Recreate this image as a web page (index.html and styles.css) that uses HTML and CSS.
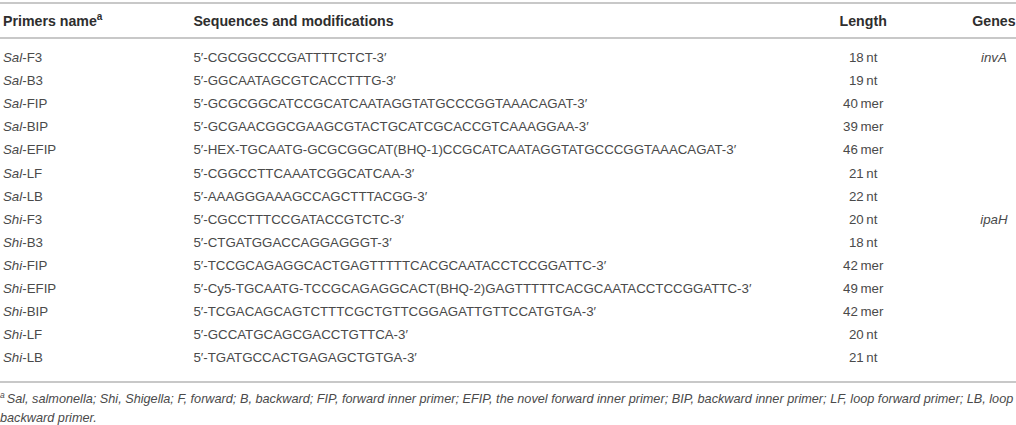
FILE: index.html
```html
<!DOCTYPE html>
<html lang="en">
<head>
<meta charset="utf-8">
<title>Primers</title>
<link rel="stylesheet" href="styles.css">
</head>
<body>
<div class="wrap">
<table class="primers">
  <colgroup>
    <col class="c-name">
    <col class="c-seq">
    <col class="c-len">
    <col class="c-gene">
  </colgroup>
  <thead>
    <tr>
      <th class="name">Primers name<sup>a</sup></th>
      <th class="seq">Sequences and modifications</th>
      <th class="len">Length</th>
      <th class="gene">Genes</th>
    </tr>
  </thead>
  <tbody>
    <tr class="pad-top"><td colspan="4"></td></tr>
    <tr><td class="name"><i>Sal</i>-F3</td><td class="seq">5′-CGCGGCCCGATTTTCTCT-3′</td><td class="len">18&thinsp;nt</td><td class="gene"><i>invA</i></td></tr>
    <tr><td class="name"><i>Sal</i>-B3</td><td class="seq">5′-GGCAATAGCGTCACCTTTG-3′</td><td class="len">19&thinsp;nt</td><td class="gene"></td></tr>
    <tr><td class="name"><i>Sal</i>-FIP</td><td class="seq">5′-GCGCGGCATCCGCATCAATAGGTATGCCCGGTAAACAGAT-3′</td><td class="len">40&thinsp;mer</td><td class="gene"></td></tr>
    <tr><td class="name"><i>Sal</i>-BIP</td><td class="seq">5′-GCGAACGGCGAAGCGTACTGCATCGCACCGTCAAAGGAA-3′</td><td class="len">39&thinsp;mer</td><td class="gene"></td></tr>
    <tr><td class="name"><i>Sal</i>-EFIP</td><td class="seq">5′-HEX-TGCAATG-GCGCGGCAT(BHQ-1)CCGCATCAATAGGTATGCCCGGTAAACAGAT-3′</td><td class="len">46&thinsp;mer</td><td class="gene"></td></tr>
    <tr><td class="name"><i>Sal</i>-LF</td><td class="seq">5′-CGGCCTTCAAATCGGCATCAA-3′</td><td class="len">21&thinsp;nt</td><td class="gene"></td></tr>
    <tr><td class="name"><i>Sal</i>-LB</td><td class="seq">5′-AAAGGGAAAGCCAGCTTTACGG-3′</td><td class="len">22&thinsp;nt</td><td class="gene"></td></tr>
    <tr><td class="name"><i>Shi</i>-F3</td><td class="seq">5′-CGCCTTTCCGATACCGTCTC-3′</td><td class="len">20&thinsp;nt</td><td class="gene"><i>ipaH</i></td></tr>
    <tr><td class="name"><i>Shi</i>-B3</td><td class="seq">5′-CTGATGGACCAGGAGGGT-3′</td><td class="len">18&thinsp;nt</td><td class="gene"></td></tr>
    <tr><td class="name"><i>Shi</i>-FIP</td><td class="seq">5′-TCCGCAGAGGCACTGAGTTTTTCACGCAATACCTCCGGATTC-3′</td><td class="len">42&thinsp;mer</td><td class="gene"></td></tr>
    <tr><td class="name"><i>Shi</i>-EFIP</td><td class="seq">5′-Cy5-TGCAATG-TCCGCAGAGGCACT(BHQ-2)GAGTTTTTCACGCAATACCTCCGGATTC-3′</td><td class="len">49&thinsp;mer</td><td class="gene"></td></tr>
    <tr><td class="name"><i>Shi</i>-BIP</td><td class="seq">5′-TCGACAGCAGTCTTTCGCTGTTCGGAGATTGTTCCATGTGA-3′</td><td class="len">42&thinsp;mer</td><td class="gene"></td></tr>
    <tr><td class="name"><i>Shi</i>-LF</td><td class="seq">5′-GCCATGCAGCGACCTGTTCA-3′</td><td class="len">20&thinsp;nt</td><td class="gene"></td></tr>
    <tr><td class="name"><i>Shi</i>-LB</td><td class="seq">5′-TGATGCCACTGAGAGCTGTGA-3′</td><td class="len">21&thinsp;nt</td><td class="gene"></td></tr>
    <tr class="pad-bottom"><td colspan="4"></td></tr>
  </tbody>
</table>
<p class="note"><sup>a</sup>Sal, salmonella; Shi, Shigella; F, forward; B, backward; FIP, forward inner primer; EFIP, the novel forward inner primer; BIP, backward inner primer; LF, loop forward primer; LB, loop backward primer.</p>
</div>
</body>
</html>
```

FILE: styles.css
```css
html, body {
  margin: 0;
  padding: 0;
  background: #ffffff;
}

.wrap {
  width: 1016px;
  padding-top: 2px;
  font-family: "Liberation Sans", Arial, sans-serif;
  color: #4a4a4a;
}

.primers {
  width: 1016px;
  border-collapse: collapse;
  table-layout: fixed;
  font-size: 13.3px;
}

.c-name { width: 193px; }
.c-seq { width: 560px; }
.c-len { width: 217px; }
.c-gene { width: 44px; }

.primers thead tr {
  border-top: 2px solid #c8c8c8;
  border-bottom: 2px solid #c8c8c8;
}

.primers th {
  font-weight: bold;
  font-size: 14.2px;
  color: #2e2e2e;
  height: 33px;
  padding: 0;
  vertical-align: middle;
  text-align: left;
}

.primers th sup {
  font-size: 10px;
  line-height: 0;
}

.primers td {
  height: 23.1px;
  padding: 0;
  vertical-align: middle;
  white-space: nowrap;
}

.primers .name { padding-left: 3px; }
.primers .len { text-align: center; }
.primers .gene { text-align: center; }
.primers th.len, .primers th.gene { text-align: center; }

.primers .pad-top td { height: 7px; }
.primers .pad-bottom td { height: 12px; }

.primers tbody tr:last-child {
  border-bottom: 2px solid #c8c8c8;
}

.note {
  margin: 7px 0 0 0;
  font-size: 12.7px;
  line-height: 19px;
  font-style: italic;
  color: #4a4a4a;
}

.note sup {
  font-size: 8.5px;
  line-height: 0;
  margin-right: 2px;
}
```
